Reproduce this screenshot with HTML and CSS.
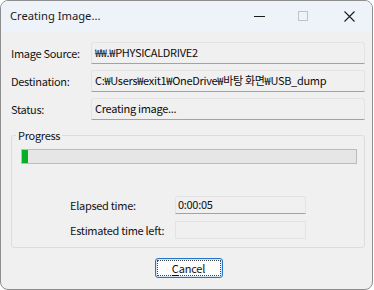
FILE: index.html
```html
<!DOCTYPE html>
<html>
<head>
<meta charset="utf-8">
<link rel="stylesheet" href="styles.css">
</head>
<body>
<div class="window">
  <div class="titlebar">
    <span class="title">Creating Image...</span>
    <div class="caption">
      <span class="cbtn min"><svg width="11" height="1" viewBox="0 0 11 1"><rect width="11" height="1" fill="#1b1b1b"/></svg></span>
      <span class="cbtn"><svg width="10" height="10" viewBox="0 0 10 10"><rect x="0.5" y="0.5" width="9" height="9" fill="none" stroke="#c3c3c3" stroke-width="1"/></svg></span>
      <span class="cbtn"><svg width="11" height="11" viewBox="0 0 11 11"><path d="M0.5 0.5 L10.5 10.5 M10.5 0.5 L0.5 10.5" stroke="#1b1b1b" stroke-width="1.1" fill="none"/></svg></span>
    </div>
  </div>
  <div class="client">
    <div class="info">
      <span class="lbl">Image Source:</span><div class="field">₩₩.₩PHYSICALDRIVE2</div>
      <span class="lbl">Destination:</span><div class="field">C:₩Users₩exit1₩OneDrive₩바탕 화면₩USB_dump</div>
      <span class="lbl">Status:</span><div class="field">Creating image...</div>
    </div>
    <fieldset class="group">
      <legend>Progress</legend>
      <div class="bar"><div class="fill" style="width:6px"></div></div>
      <div class="times">
        <span class="lbl">Elapsed time:</span><div class="field small">0:00:05</div>
        <span class="lbl">Estimated time left:</span><div class="field small off"></div>
      </div>
    </fieldset>
    <div class="actions">
      <button class="btn"><span class="focus"><u>C</u>ancel</span></button>
    </div>
  </div>
</div>
</body>
</html>
```

FILE: styles.css
```css
html, body {
  margin: 0;
  padding: 0;
  background: #ffffff;
}
body {
  font-family: "Noto Sans CJK KR", "Noto Sans", sans-serif;
  font-size: 11px;
  letter-spacing: -0.3px;
  color: #141414;
}
.window {
  width: 373px;
  height: 290px;
  box-sizing: border-box;
  border: 1px solid #8e8e8e;
  border-radius: 8px;
  overflow: hidden;
  background: #f0f0f0;
  display: flex;
  flex-direction: column;
}
.titlebar {
  height: 31px;
  flex: none;
  background: #eef2f9;
  display: flex;
  align-items: center;
}
.title {
  flex: 1;
  padding-left: 9px;
  font-family: "Noto Sans", sans-serif;
  font-size: 11.2px;
  letter-spacing: 0;
  color: #1a1a1a;
  line-height: 16px;
  margin-top: -1px;
}
.caption {
  display: flex;
  height: 31px;
}
.cbtn {
  width: 46px;
  height: 31px;
  display: flex;
  align-items: center;
  justify-content: center;
}
.cbtn svg {
  margin-top: -1px;
}
.cbtn.min svg {
  margin-left: 4px;
}
.client {
  flex: 1;
  padding: 10px 7px 0 10px;
  display: flex;
  flex-direction: column;
}
.info {
  display: grid;
  grid-template-columns: 80px 1fr;
  row-gap: 6px;
  align-items: center;
}
.lbl {
  line-height: 16px;
  white-space: nowrap;
}
.field {
  height: 22px;
  box-sizing: border-box;
  border: 1px solid #e3e3e3;
  border-bottom-color: #a2a2a2;
  border-radius: 3px 3px 0 0;
  background: #f0f0f0;
  padding: 0 3px;
  line-height: 19px;
  white-space: nowrap;
  overflow: hidden;
  color: #0d0d0d;
}
.group {
  margin: 7px 0 0 0;
  padding: 0 7px 8px 9px;
  border: 1px solid #dcdcdc;
  border-radius: 3px;
  min-width: 0;
}
.group legend {
  padding: 0 2px;
  margin-left: -5px;
  line-height: 16px;
}
.bar {
  margin-top: 6px;
  height: 15px;
  box-sizing: border-box;
  border: 1px solid #bcbcbc;
  background: #e6e6e6;
}
.fill {
  height: 100%;
  background: #06b025;
}
.times {
  margin: 32px 0 0 49px;
  display: grid;
  grid-template-columns: 105px 131px;
  row-gap: 7px;
  align-items: center;
}
.field.small {
  height: 18px;
  line-height: 15px;
  padding: 0 2px;
}
.field.off {
  border-bottom-color: #e3e3e3;
  border-radius: 0;
}
.actions {
  margin-top: 10px;
  display: flex;
  justify-content: center;
  padding-left: 1px;
}
.btn {
  width: 68px;
  height: 20px;
  box-sizing: border-box;
  padding: 1px;
  margin: 0;
  border: 1px solid #1f74cc;
  border-radius: 3px;
  background: #fdfdfd;
  box-shadow: inset 0 0 0 1px #d4e6f8;
  font-family: "Noto Sans CJK KR", "Noto Sans", sans-serif;
  font-size: 11px;
  letter-spacing: -0.2px;
  color: #111;
  display: flex;
}
.focus {
  flex: 1;
  border: 1px dotted #444;
  line-height: 14px;
  text-align: center;
}
.focus u {
  text-underline-offset: 2px;
}
```
